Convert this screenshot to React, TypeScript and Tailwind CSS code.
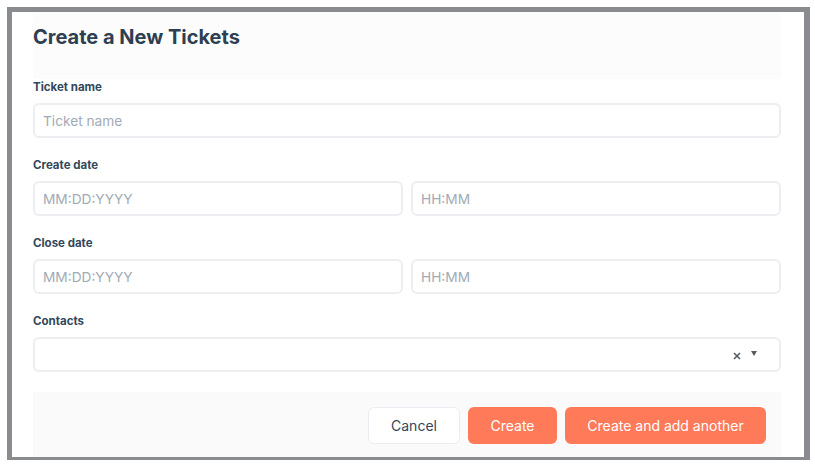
import { ChangeEvent, useState } from 'react';

const Field = ({ label, children }: { label: string; children: React.ReactNode }) => (
    <div className="flex flex-col">
        <label className="h-4 text-[11.5px] font-bold leading-4 text-[#33475b]">{label}</label>
        <div className="mt-2">{children}</div>
    </div>
);

const TextInput = ({ placeholder }: { placeholder: string }) => {
    const [value, setValue] = useState('');
    return (
        <input
            value={value}
            onChange={(e: ChangeEvent<HTMLInputElement>) => setValue(e.target.value)}
            placeholder={placeholder}
            className="h-[35px] w-full rounded-md border-2 border-[#eceef2] bg-white px-[8px] text-[13.7px] text-[#33475b] outline-none placeholder:text-[#a2abb5]"
        />
    );
};

export default function App() {
    return (
        <div className="min-h-screen bg-white pl-[7px] pt-[7px] font-['Inter',sans-serif]">
            <div className="flex h-[453px] w-[803px] flex-col border-[5px] border-b-[3px] border-r-[6px] border-[#898b8f] pl-[21px] pr-[23px]">
                {/* header */}
                <div className="h-[67px] bg-[#fcfcfc] pt-[11px]">
                    <h1 className="text-[20px] font-bold leading-7 text-[#2e3f52]">
                        Create a New Tickets
                    </h1>
                </div>

                {/* form */}
                <div className="flex flex-col gap-[19px]">
                    <Field label="Ticket name">
                        <TextInput placeholder="Ticket name" />
                    </Field>
                    <Field label="Create date">
                        <div className="grid grid-cols-2 gap-[8px]">
                            <TextInput placeholder="MM:DD:YYYY" />
                            <TextInput placeholder="HH:MM" />
                        </div>
                    </Field>
                    <Field label="Close date">
                        <div className="grid grid-cols-2 gap-[8px]">
                            <TextInput placeholder="MM:DD:YYYY" />
                            <TextInput placeholder="HH:MM" />
                        </div>
                    </Field>
                    <Field label="Contacts">
                        <div className="flex h-[35px] w-full items-center justify-end gap-[10px] rounded-md border-2 border-[#eceef2] bg-white pr-[22px] text-[#555b63]">
                            <svg width="8" height="8" viewBox="0 0 8 8" className="mt-[2px]">
                                <path d="M1 1L7 7M7 1L1 7" stroke="currentColor" strokeWidth="1.6" />
                            </svg>
                            <svg width="6" height="5" viewBox="0 0 6 5" className="-mt-[2px]">
                                <path d="M0 0H6L3 5Z" fill="currentColor" />
                            </svg>
                        </div>
                    </Field>
                </div>

                {/* footer */}
                <div className="mt-[20px] flex flex-1 items-start justify-end gap-[8px] bg-[#fafafa] pr-[15px] pt-[15px]">
                    <button className="h-[37px] w-[92px] rounded-md border border-[#eaedf1] bg-white text-[14px] text-[#33475b]">
                        Cancel
                    </button>
                    <button className="h-[37px] w-[89px] rounded-md bg-[#ff7a59] text-[14px] text-white">
                        Create
                    </button>
                    <button className="h-[37px] w-[201px] rounded-md bg-[#ff7a59] text-[14px] text-white">
                        Create and add another
                    </button>
                </div>
            </div>
        </div>
    );
}
